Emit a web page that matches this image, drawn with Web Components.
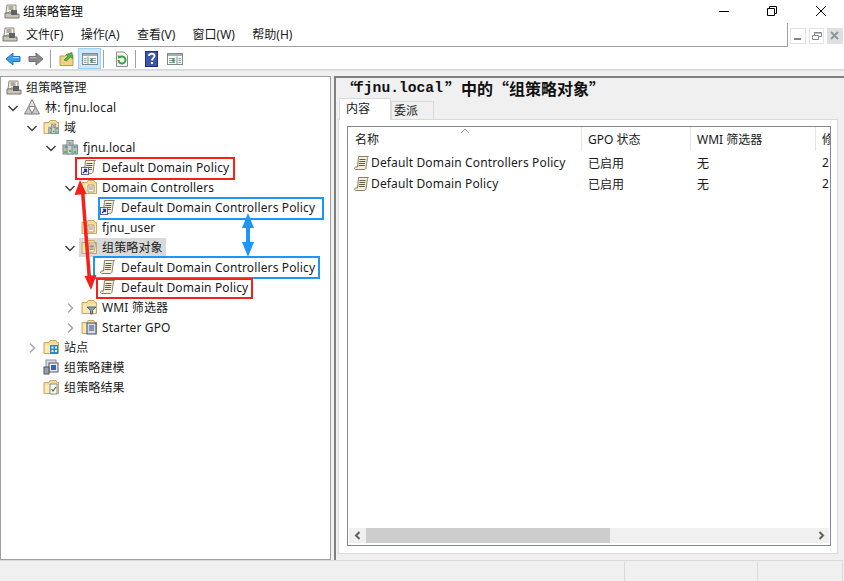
<!DOCTYPE html>
<html>
<head>
<meta charset="utf-8">
<title>组策略管理</title>
<style>
html,body{margin:0;padding:0;background:#f0f0f0}
body{width:844px;height:581px;overflow:hidden;font:12px "Noto Sans","Noto Sans CJK SC",sans-serif;color:#1a1a1a}
</style>
</head>
<body>
<gpm-app></gpm-app>
<script>
// all the little mmc icons, 16x16 unless the viewBox says otherwise
const FOLDER = `<path d="M1 3.500h5l1-2h6l1 2h1.500v11H1z" fill="#f6dc97" stroke="#c9a865"/><path d="M2 5.500h13v8.500H2z" fill="#fbe9b5"/>`;
const SCROLL = `<path d="M4.500 1.500h10c-1 .8-1.300 1.500-1.200 2.500l-1.300 9c-.2 1-1 1.500-2 1.500H2c-.9 0-1.500-.6-1.500-1.200 0-.7.6-1.300 1.500-1.300h1.500z" fill="#f7f0d8" stroke="#8a8068"/><path d="M5.500 4.500h6M5.300 6.500h6M5 8.500h6M4.800 10.500h6" stroke="#5f5a4a"/>`;
const SERVER = `<rect x="1" y="6" width="6" height="9" fill="#b4c0c0" stroke="#7b8a8a"/><rect x="5" y="1.500" width="6" height="13.500" fill="#c9d3d3" stroke="#7b8a8a"/><rect x="10" y="6" width="5.500" height="9" fill="#b4c0c0" stroke="#7b8a8a"/><path d="M6.500 4h3M6.500 6h3M2.500 8h3M11.500 8h3" stroke="#667"/><path d="M7 11h2v2H7zM2.500 12h2v2h-2zM12 12h2v2h-2z" fill="#4cb648"/>`;
const ICONS = {
  snapin:`<path d="M3 2h9v7H5l-1 1H2z" fill="#f2eee0" stroke="#8f8a78"/><path d="M4.500 4h5M4.500 6h5" stroke="#666"/><path d="M1 10h8l1 1h5v4H1z" fill="#c9c5b5" stroke="#777"/><path d="M7 7h6v5H7z" fill="#5c6468"/>`,
  forest:`<path d="M8 0.500l3.500 7h-7z" fill="#e2e2e2" stroke="#808080"/><path d="M4.500 7.500l4 7.500h-8z" fill="#c8c8c8" stroke="#808080"/><path d="M11.500 7.500l4 7.500h-8z" fill="#c8c8c8" stroke="#808080"/>`,
  domains:`${FOLDER}<g transform="translate(5 4) scale(.7)">${SERVER}</g>`,
  domain:SERVER,
  gpolink:`${SCROLL}<rect x="0.500" y="8.500" width="7" height="7" fill="#fff" stroke="#5562b0"/><path d="M2 14l3-3M2.800 10.500H5.500V13.200" stroke="#2c2c9a" stroke-width="1.300" fill="none"/>`,
  ou:`${FOLDER}<path d="M7 6h6v7H7z" fill="#fff" stroke="#b59a5f"/><path d="M8 8h4M8 10h4" stroke="#888"/>`,
  gpo:SCROLL,
  gpofolder:`${FOLDER}<g transform="translate(5 3) scale(.7)">${SCROLL}</g>`,
  wmi:`${FOLDER}<path d="M6 8h9l-3.500 3.500V15h-2v-3.500z" fill="#8aa0b0" stroke="#4f6272"/>`,
  starter:`${FOLDER}<rect x="6" y="4" width="9" height="11" fill="#d5dbe6" stroke="#3d4c66"/><path d="M8 7h5M8 9h5M8 11h5" stroke="#3d4c66"/>`,
  sites:`${FOLDER}<path d="M7 6h8v9H7z" fill="#2f88c5"/><path d="M8.500 7.500h2v2h-2zM12 7.500h2v2h-2zM8.500 11h2v2h-2zM12 11h2v2h-2z" fill="#dff"/>`,
  modeling:`<rect x="3" y="1" width="10" height="8" fill="#d4dae6" stroke="#8a90a0"/><rect x="6" y="4" width="9" height="9" fill="#e8ecf4" stroke="#556"/><path d="M8 6h5v5H8z" fill="#3f5fb5"/><rect x="1" y="8" width="5" height="7" fill="#9aa0a6" stroke="#555"/>`,
  results:`${FOLDER}<path d="M7 5h7v10H7z" fill="#fff" stroke="#888"/><path d="M8.500 10l1.500 2 3-4" stroke="#2a7a3a" fill="none" stroke-width="1.200"/>`,
  back:`<path d="M1 8l7-6v3.500h7v5H8V14z" fill="#3aa0e8" stroke="#2277c4"/><path d="M8 6h6v1H8z" fill="#a8dcff"/>`,
  forward:`<path d="M15 8l-7-6v3.500H1v5h7V14z" fill="#8a8a8a" stroke="#6c6c6c"/><path d="M2 6h6v1H2z" fill="#bcbcbc"/>`,
  up:`<path d="M1 5h5l1-1h7v10.500H1z" fill="#f0d285" stroke="#b99a55"/><path d="M5 9l4-4-2-1.500 6-2 .5 6-2-1.500-4 4z" fill="#58b04c" stroke="#3a8a3a" stroke-width=".7"/>`,
  tree:`<rect x=".5" y="2.500" width="15" height="11" fill="#f8fafa" stroke="#7d8b8f"/><path d="M1 3h14v2H1z" fill="#9fb0b5"/><path d="M6 5.500v8" stroke="#7d8b8f"/><path d="M8 7.500h6M8 9.500h6M8 11.500h6M2 7.500h2.500M2 9.500h2.500M2 11.500h2.500" stroke="#8a9a9e"/><path d="M10.500 7v5l-3-2.500z" fill="#2f9a44"/>`,
  refresh:`<path d="M2.500 1h7.500l3.500 3.500v11h-11z" fill="#f4f4f4" stroke="#8f8f8f"/><path d="M4.500 9a3.500 3.500 0 1 0 1-2.500" stroke="#37a33c" stroke-width="2" fill="none"/><path d="M3.500 4.500l4 .5-3 3z" fill="#37a33c"/>`,
  help:`<rect x=".5" y=".5" width="12" height="15" fill="#3f55a8" stroke="#1f2f78"/><path d="M4 5c0-3 5.500-3 5.500 0 0 2-2.500 2-2.500 4.500" stroke="#fff" stroke-width="1.800" fill="none"/><path d="M6 11h2v2H6z" fill="#fff"/>`,
  action:`<rect x=".5" y="2.500" width="15" height="11" fill="#f8fafa" stroke="#7d8b8f"/><path d="M1 3h14v2H1z" fill="#9fb0b5"/><path d="M10 5.500v8" stroke="#7d8b8f"/><path d="M2 7.500h6M2 9.500h6M2 11.500h6M11.500 7.500h2.500M11.500 9.500h2.500M11.500 11.500h2.500" stroke="#8a9a9e"/><path d="M5.500 7v5l3-2.500z" fill="#2f9a44"/>`
};

class GpmIcon extends HTMLElement{
  connectedCallback(){
    const s=this.getAttribute('size')||16;
    this.attachShadow({mode:'open'}).innerHTML=`<style>:host{display:block;width:${s}px;height:${s}px;flex:none}svg{display:block}</style>
      <svg width="${s}" height="${s}" viewBox="0 0 16 16">${ICONS[this.getAttribute('name')]||''}</svg>`;
  }
}

class GpmTitlebar extends HTMLElement{
  constructor(){
    super();
    this.attachShadow({mode:'open'}).innerHTML=`<style>
      :host{display:flex;align-items:center;height:21px;padding-bottom:2px;background:#fff;padding-left:4px;gap:3px;font-size:12px;color:#000}
      .sp{flex:1}
      .b{width:46px;height:21px;display:flex;align-items:center;justify-content:center}
      </style>
      <gpm-icon name="snapin"></gpm-icon><span><slot></slot></span><span class="sp"></span>
      <div class="b" style="margin-right:-1px"><svg width="10" height="10"><path d="M0 5.500h10" stroke="#000"/></svg></div>
      <div class="b"><svg width="10" height="10"><path d="M.5 2.500h7v7h-7zM2.500 2.500v-2h7v7h-2" fill="none" stroke="#000"/></svg></div>
      <div class="b"><svg width="10" height="10"><path d="M0 0l10 10M10 0L0 10" stroke="#000"/></svg></div>`;
  }
}

class GpmMenubar extends HTMLElement{
  constructor(){
    super();
    this.attachShadow({mode:'open'}).innerHTML=`<style>
      :host{display:flex;align-items:center;height:22px;padding-bottom:2px;background:#fff;padding-left:2px;box-shadow:inset 0 -1px 0 #a0a0a0;position:relative}
      .items{display:flex;margin-left:8px;color:#1a1a1a}
      ::slotted(span){margin-right:17.300px}
      .mdi{position:absolute;right:0;top:0;display:flex;gap:3px;align-items:center;border-left:1px solid #a0a0a0;background:#fff;height:24px;width:57px;padding:0 1px 1px 2px;box-sizing:border-box}
      .m{width:14px;height:14px;border:1px solid #e3e3e3;display:flex;align-items:center;justify-content:center;box-sizing:content-box;margin-top:3px}
      .m.x{background:#dfdfdf;border-color:#dfdfdf}
      </style>
      <gpm-icon name="snapin"></gpm-icon><div class="items"><slot></slot></div>
      <div class="mdi">
        <div class="m"><svg width="10" height="10"><path d="M1 8h7" stroke="#7d8790" stroke-width="2"/></svg></div>
        <div class="m"><svg width="10" height="10"><path d="M.5 4.500h6v4h-6zM2.500 4V1.500h7v4H7" fill="none" stroke="#7d8790"/><path d="M2 2h7" stroke="#7d8790"/></svg></div>
        <div class="m x"><svg width="10" height="10"><path d="M1 1l7 7M8 1L1 8" stroke="#8f98a0" stroke-width="2"/></svg></div>
      </div>`;
  }
}

class GpmToolbar extends HTMLElement{
  constructor(){
    super();
    this.attachShadow({mode:'open'}).innerHTML=`<style>
      :host{display:flex;align-items:center;height:21px;background:#fff;border-bottom:2px solid #dcdcdc;padding:1px 0 0 5px;gap:0}
      .sep{width:1px;height:18px;background:#a0a0a0}
      .on{display:flex;align-items:center;justify-content:center;width:21px;height:19px;background:#cce8ff;border:1px solid #99d1ff}
      </style>
      <gpm-icon name="back"></gpm-icon>
      <gpm-icon name="forward" style="margin-left:7px"></gpm-icon>
      <div class="sep" style="margin:0 8px 0 6px"></div>
      <gpm-icon name="up"></gpm-icon>
      <div class="on" style="margin-left:3px"><gpm-icon name="tree"></gpm-icon></div>
      <div class="sep" style="margin:0 10px 0 2px"></div>
      <gpm-icon name="refresh"></gpm-icon>
      <div class="sep" style="margin:0 9px 0 5px"></div>
      <gpm-icon name="help"></gpm-icon>
      <gpm-icon name="action" style="margin-left:6px"></gpm-icon>`;
  }
}

class GpmRow extends HTMLElement{
  connectedCallback(){
    const depth=Number(this.getAttribute('depth')||0), arrow=this.getAttribute('arrow');
    const bare=this.hasAttribute('bare');
    const chev = arrow==='down'?`<svg width="12" height="12"><path d="M1.500 4L6 8.500 10.500 4" fill="none" stroke="#404040" stroke-width="1.500"/></svg>`
      : arrow==='right'?`<svg width="12" height="12"><path d="M4 1.500L8.500 6 4 10.500" fill="none" stroke="#a6a6a6" stroke-width="1.500"/></svg>`:'';
    this.attachShadow({mode:'open'}).innerHTML=`<style>
      :host{display:flex;align-items:center;height:20px;padding-left:${bare?5:depth*19+6}px}
      .c{width:${bare?0:12}px;height:12px;flex:none;margin-right:${bare?0:3}px}
      .wrap{display:flex;align-items:center;height:19px;padding:0 3px 0 2px}
      :host([selected]) .wrap{background:#d9d9d9}
      .t{margin-left:${bare?4:5}px;white-space:nowrap;letter-spacing:.13px}
      </style>
      <div class="c">${chev}</div>
      <div class="wrap" style="margin-left:${bare?-2:0}px"><gpm-icon name="${this.getAttribute('icon')}"></gpm-icon><div class="t"><slot></slot></div></div>`;
  }
}

class GpmTree extends HTMLElement{
  constructor(){
    super();
    this.attachShadow({mode:'open'}).innerHTML=`<style>
      :host{display:block;background:#fff;border:1px solid #a0a0a0;box-sizing:border-box;width:331px}
      </style><slot></slot>`;
  }
}

class GpmDetails extends HTMLElement{
  constructor(){
    super();
    const cols=[['名称',234],['GPO 状态',109],['WMI 筛选器',125],['修',16]];
    const row=(n)=>`<div class="r"><div class="n" style="width:234px"><gpm-icon name="gpo"></gpm-icon><span>${n}</span></div><div style="width:109px">已启用</div><div style="width:125px">无</div><div style="width:14px;overflow:hidden">2</div></div>`;
    this.attachShadow({mode:'open'}).innerHTML=`<style>
      :host{display:flex;flex-direction:column;flex:1;min-width:0;border-left:2px solid #808080;border-top:2px solid #808080;box-sizing:border-box;background:#f0f0f0}
      h1{margin:0;height:21px;padding:0 0 0 5px;font:bold 16px/20px "Noto Sans CJK SC",sans-serif;color:#111;white-space:nowrap}
      .tabs{display:flex;height:21px;padding-left:3px;align-items:flex-end}
      .tab{background:#f0f0f0;border:1px solid #d9d9d9;border-bottom:0;height:18px;width:39px;padding-left:2px;line-height:17px;box-sizing:content-box}
      .tab.on{background:#fff;height:21px;width:44px;line-height:20px;padding:0 0 0 6px;position:relative;z-index:1}
      .panel{flex:1;margin:-1px 6px 6px 2px;background:#fff;border:1px solid #d9d9d9;padding:6px 6px 7px 8px;display:flex;min-height:0}
      .list{flex:1;border:1px solid #828790;display:flex;flex-direction:column;padding:0;min-width:0;overflow:hidden}
      .hd{display:flex;height:25px;align-items:flex-start;position:relative;flex:none}
      .hd div{box-sizing:border-box;height:24px;line-height:25px;padding-left:6px;border-right:1px solid #e5e5e5;flex:none;white-space:nowrap;overflow:hidden}
      .hd div:first-child{padding-left:7px}
      .sort{position:absolute;left:112px;top:1px;width:10px;height:6px}
      .rows{flex:1}
      .r{display:flex;height:21px;align-items:center;white-space:nowrap}
      .r>div{flex:none;padding-left:6px;box-sizing:border-box}
      .r .n{display:flex;align-items:center;gap:1px;letter-spacing:.14px}
      .sb{flex:none;height:15px;margin:0 1px 2px 1px;background:#f0f0f0;display:flex;align-items:center}
      .sb .a{width:17px;height:15px;display:flex;align-items:center;justify-content:center;flex:none}
      .sb .th{width:244px;height:15px;background:#cdcdcd}
      .sb .sp{flex:1}
      </style>
      <h1><slot name="title"></slot></h1>
      <div class="tabs"><div class="tab on">内容</div><div class="tab">委派</div></div>
      <div class="panel"><div class="list">
        <div class="hd">${cols.map(c=>`<div style="width:${c[1]}px">${c[0]}</div>`).join('')}
          <svg class="sort" viewBox="0 0 10 6"><path d="M1 5l4-4 4 4" fill="none" stroke="#9a9a9a"/></svg></div>
        <div class="rows">${row('Default Domain Controllers Policy')}${row('Default Domain Policy')}</div>
        <div class="sb"><div class="a"><svg width="8" height="9"><path d="M5.500 1L2 4.500 5.500 8" fill="none" stroke="#606060" stroke-width="2"/></svg></div><div class="th"></div><div class="sp"></div><div class="a"><svg width="8" height="9"><path d="M2.500 1L6 4.500 2.500 8" fill="none" stroke="#606060" stroke-width="2"/></svg></div></div>
      </div></div>`;
  }
}

class GpmStatus extends HTMLElement{
  constructor(){
    super();
    this.attachShadow({mode:'open'}).innerHTML=`<style>
      :host{display:flex;height:21px;background:#f0f0f0;border-top:1px solid #d9d9d9;box-sizing:border-box;padding-top:1px}
      div{box-sizing:border-box;border-right:1px solid #d9d9d9}
      </style><div style="width:625px"></div><div style="width:133px"></div><div style="width:85px"></div>`;
  }
}

class GpmApp extends HTMLElement{
  constructor(){
    super();
    this.attachShadow({mode:'open'}).innerHTML=`<style>
      :host{display:flex;flex-direction:column;width:844px;height:581px;background:#f0f0f0;position:relative}
      .main{flex:1;display:flex;gap:3px;padding-top:5px;min-height:0;position:relative}
      gpm-tree{flex:none}
      .ann{position:absolute;left:0;top:0;pointer-events:none}
      .ttl{display:flex}
      .q{display:inline-block;width:16px}
      .q.o{text-align:center}
      .l{font:bold 14.670px/20px "Liberation Mono",monospace;margin:0 2px 0 -2px}
      </style>
      <gpm-titlebar>组策略管理</gpm-titlebar>
      <gpm-menubar><span>文件(F)</span><span>操作(A)</span><span>查看(V)</span><span>窗口(W)</span><span>帮助(H)</span></gpm-menubar>
      <gpm-toolbar></gpm-toolbar>
      <div class="main">
        <gpm-tree>
          <gpm-row depth="0" icon="snapin" bare>组策略管理</gpm-row>
          <gpm-row depth="0" arrow="down" icon="forest">林: fjnu.local</gpm-row>
          <gpm-row depth="1" arrow="down" icon="domains">域</gpm-row>
          <gpm-row depth="2" arrow="down" icon="domain">fjnu.local</gpm-row>
          <gpm-row depth="3" icon="gpolink">Default Domain Policy</gpm-row>
          <gpm-row depth="3" arrow="down" icon="ou">Domain Controllers</gpm-row>
          <gpm-row depth="4" icon="gpolink">Default Domain Controllers Policy</gpm-row>
          <gpm-row depth="3" icon="ou">fjnu_user</gpm-row>
          <gpm-row depth="3" arrow="down" icon="gpofolder" selected>组策略对象</gpm-row>
          <gpm-row depth="4" icon="gpo">Default Domain Controllers Policy</gpm-row>
          <gpm-row depth="4" icon="gpo">Default Domain Policy</gpm-row>
          <gpm-row depth="3" arrow="right" icon="wmi">WMI 筛选器</gpm-row>
          <gpm-row depth="3" arrow="right" icon="starter">Starter GPO</gpm-row>
          <gpm-row depth="1" arrow="right" icon="sites">站点</gpm-row>
          <gpm-row depth="1" icon="modeling" style="padding-left:25px">组策略建模</gpm-row>
          <gpm-row depth="1" icon="results" style="padding-left:25px">组策略结果</gpm-row>
        </gpm-tree>
        <gpm-details><span slot="title" class="ttl"><span class="q o">“</span><span class="l">fjnu.local</span><span class="q">”</span>中的<span class="q o">“</span>组策略对象<span class="q">”</span></span></gpm-details>
      </div>
      <gpm-status></gpm-status>
      <svg class="ann" width="844" height="581" fill="none">
        <rect x="76" y="158" width="158" height="21" stroke="#f5221b" stroke-width="2"/>
        <rect x="99" y="198" width="224" height="21" stroke="#1e96f5" stroke-width="2"/>
        <rect x="94" y="257" width="225" height="21" stroke="#1e96f5" stroke-width="2"/>
        <rect x="97" y="279" width="155" height="19" stroke="#f5221b" stroke-width="2"/>
        <path d="M82.500 190L89.500 280" stroke="#f5221b" stroke-width="3.500"/>
        <path d="M80 180l-5.500 15 12-1zM91 290l5.500-15-12 1z" fill="#f5221b"/>
        <path d="M248 225v22" stroke="#1e96f5" stroke-width="4"/>
        <path d="M248 213l-6 15h12zM248 257l-6-15h12z" fill="#1e96f5"/>
      </svg>`;
  }
}

customElements.define('gpm-icon',GpmIcon);
customElements.define('gpm-titlebar',GpmTitlebar);
customElements.define('gpm-menubar',GpmMenubar);
customElements.define('gpm-toolbar',GpmToolbar);
customElements.define('gpm-row',GpmRow);
customElements.define('gpm-tree',GpmTree);
customElements.define('gpm-details',GpmDetails);
customElements.define('gpm-status',GpmStatus);
customElements.define('gpm-app',GpmApp);
</script>
</body>
</html>
